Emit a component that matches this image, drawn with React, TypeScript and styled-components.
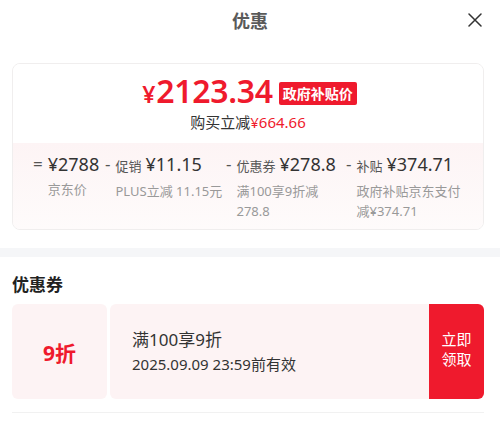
import { createGlobalStyle, styled } from 'styled-components'

const GlobalStyle = createGlobalStyle`
  html, body {
    margin: 0;
    padding: 0;
    background: #ffffff;
  }
  body {
    font-family: "Noto Sans", "Noto Sans CJK SC", sans-serif;
    color: #333;
  }
`

const RED = '#ef1a2d'

const Sheet = styled.div`
  width: 500px;
  height: 424px;
  overflow: hidden;
  background: #fff;
`

const Header = styled.div`
  position: relative;
  height: 40px;
  display: flex;
  align-items: center;
  justify-content: center;
  margin-bottom: 23px;
`

const Title = styled.h1`
  margin: 0;
  font-size: 18px;
  font-weight: 700;
  color: #5a5a5a;
  font-family: "Noto Sans CJK SC", sans-serif;
`

const CloseButton = styled.button`
  position: absolute;
  right: 17px;
  top: 12px;
  width: 16px;
  height: 16px;
  padding: 0;
  border: none;
  background: none;
  display: flex;
  align-items: center;
  justify-content: center;
  cursor: pointer;
`

const PriceCard = styled.div`
  margin: 0 16px 0 12px;
  border: 1px solid #f0eeee;
  border-radius: 8px;
  overflow: hidden;
`

const PriceTop = styled.div`
  height: 79px;
  display: flex;
  flex-direction: column;
  align-items: center;
  padding-top: 10px;
  box-sizing: border-box;
  background: #fff;
`

const PriceLine = styled.div`
  display: flex;
  align-items: center;
  gap: 6px;
  height: 36px;
  margin-left: 3px;
`

const BigPrice = styled.span`
  color: ${RED};
  font-size: 32px;
  font-weight: 600;
  letter-spacing: -0.3px;
  line-height: 36px;
`

const Yen = styled.span`
  font-size: 23px;
  margin-right: 1px;
`

const Badge = styled.span`
  background: ${RED};
  color: #fff;
  font-size: 14px;
  font-weight: 700;
  font-family: "Noto Sans CJK SC", sans-serif;
  line-height: 23px;
  padding: 0 4px;
  border-radius: 2px;
  margin-top: 3px;
`

const SaveLine = styled.div`
  margin-top: 2px;
  font-size: 15px;
  line-height: 20px;
  color: #333;
`

const SaveAmount = styled.span`
  color: ${RED};
`

const Breakdown = styled.div`
  display: grid;
  grid-template-columns: 72px 121px 120px 122px;
  padding: 8px 0 8px 20px;
  background: linear-gradient(180deg, #fdf4f5 0%, #fefbfb 100%);
`

const Column = styled.div`
  display: grid;
  grid-template-columns: auto 1fr;
  column-gap: 5px;
  align-content: start;
`

const Operator = styled.span`
  font-size: 17px;
  color: #555;
  line-height: 26px;
`

const Amount = styled.div`
  display: flex;
  align-items: baseline;
  gap: 4px;
  white-space: nowrap;
  line-height: 26px;
`

const AmountLabel = styled.span`
  font-size: 13px;
  color: #555;
`

const AmountValue = styled.span`
  font-size: 18px;
  color: #333;
`

const Note = styled.div`
  grid-column: 2;
  font-size: 13px;
  line-height: 20px;
  color: #999;
  padding-top: 2px;
`

const Divider = styled.div`
  height: 9px;
  background: #f5f6f8;
  margin-top: 18px;
`

const Section = styled.div`
  padding: 16px 16px 0 12px;
`

const SectionTitle = styled.h2`
  margin: 0 0 9px;
  font-size: 17px;
  line-height: 22px;
  font-weight: 700;
  color: #222;
  font-family: "Noto Sans CJK SC", sans-serif;
`

const Coupon = styled.div`
  display: flex;
  height: 95px;
  gap: 3px;
`

const CouponValue = styled.div`
  width: 95px;
  display: flex;
  align-items: center;
  justify-content: center;
  background: #fdf3f4;
  border-radius: 6px;
  color: ${RED};
  font-size: 21px;
  font-weight: 700;
`

const CouponBody = styled.div`
  flex: 1;
  display: flex;
  background: #fdf3f4;
  border-radius: 6px;
  overflow: hidden;
`

const CouponInfo = styled.div`
  flex: 1;
  display: flex;
  flex-direction: column;
  justify-content: center;
  padding-left: 22px;
  gap: 2px;
`

const CouponTitle = styled.div`
  font-size: 17px;
  line-height: 23px;
  color: #333;
`

const CouponExpiry = styled.div`
  font-size: 15px;
  line-height: 22px;
  color: #333;
`

const ClaimButton = styled.button`
  width: 55px;
  border: none;
  background: ${RED};
  color: #fff;
  font-size: 15px;
  line-height: 20px;
  font-family: "Noto Sans CJK SC", sans-serif;
  padding: 0 0 6px;
  cursor: pointer;
`

const BottomLine = styled.div`
  height: 1px;
  background: #f1f1f1;
  margin-top: 13px;
`

const breakdown = [
  { op: '=', label: '', value: '¥2788', note: '京东价' },
  { op: '-', label: '促销', value: '¥11.15', note: 'PLUS立减 11.15元' },
  { op: '-', label: '优惠券', value: '¥278.8', note: '满100享9折减 278.8' },
  { op: '-', label: '补贴', value: '¥374.71', note: '政府补贴京东支付减¥374.71' }
]

const App = () => {
  return (
    <Sheet>
      <GlobalStyle />
      <Header>
        <Title>优惠</Title>
        <CloseButton aria-label="close">
          <svg width="14" height="14" viewBox="0 0 14 14">
            <path d="M1 1 L13 13 M13 1 L1 13" stroke="#333" strokeWidth="1.5" strokeLinecap="round" />
          </svg>
        </CloseButton>
      </Header>

      <PriceCard>
        <PriceTop>
          <PriceLine>
            <BigPrice>
              <Yen>¥</Yen>2123.34
            </BigPrice>
            <Badge>政府补贴价</Badge>
          </PriceLine>
          <SaveLine>
            购买立减<SaveAmount>¥664.66</SaveAmount>
          </SaveLine>
        </PriceTop>
        <Breakdown>
          {breakdown.map((item, index) => (
            <Column key={index}>
              <Operator>{item.op}</Operator>
              <Amount>
                {item.label && <AmountLabel>{item.label}</AmountLabel>}
                <AmountValue>{item.value}</AmountValue>
              </Amount>
              <Note>{item.note}</Note>
            </Column>
          ))}
        </Breakdown>
      </PriceCard>

      <Divider />

      <Section>
        <SectionTitle>优惠券</SectionTitle>
        <Coupon>
          <CouponValue>9折</CouponValue>
          <CouponBody>
            <CouponInfo>
              <CouponTitle>满100享9折</CouponTitle>
              <CouponExpiry>2025.09.09 23:59前有效</CouponExpiry>
            </CouponInfo>
            <ClaimButton>
              立即
              <br />
              领取
            </ClaimButton>
          </CouponBody>
        </Coupon>
        <BottomLine />
      </Section>
    </Sheet>
  )
}

export default App
